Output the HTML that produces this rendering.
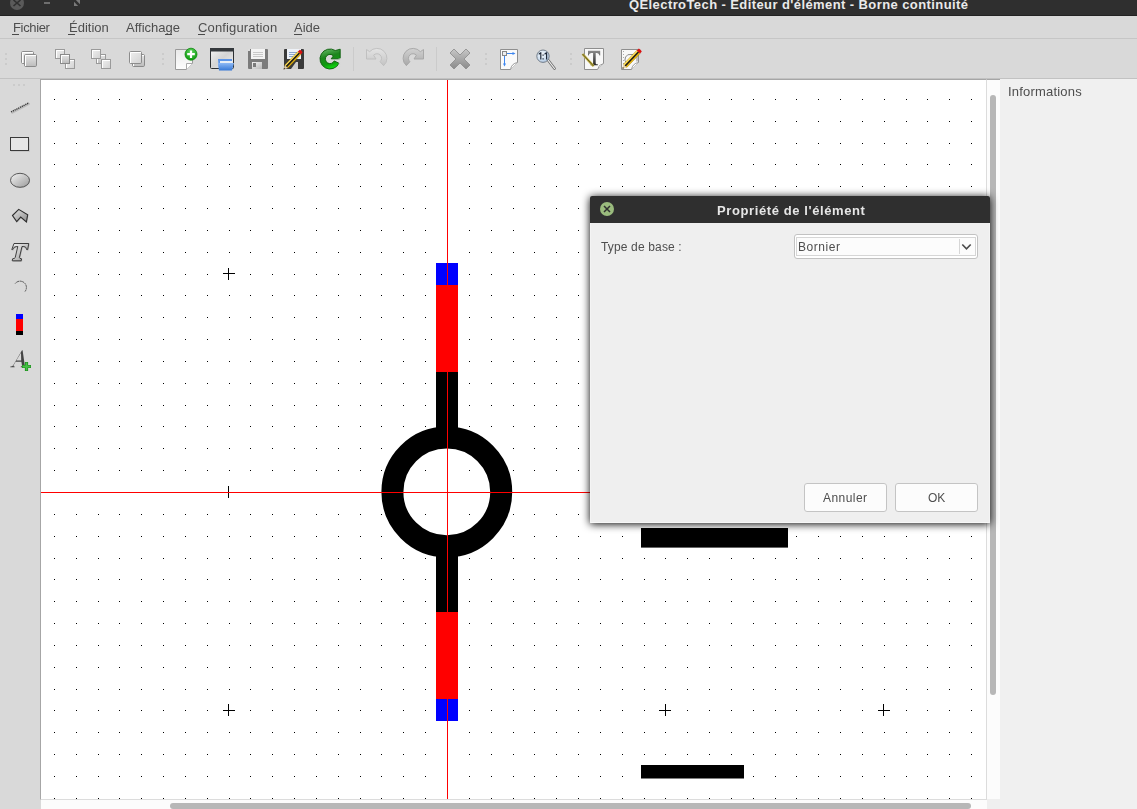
<!DOCTYPE html>
<html><head><meta charset="utf-8">
<style>
*{margin:0;padding:0;box-sizing:border-box}
html,body{width:1137px;height:809px;overflow:hidden;background:#d9d9d9;font-family:"Liberation Sans",sans-serif;}
.a{position:absolute}
.t{position:absolute;white-space:nowrap;font-size:13px;color:#4e4e4e;line-height:13px}
.m{position:absolute;height:1px;background:#4a4a4a}
.g{will-change:transform}
svg{position:absolute;left:0;top:0}
</style></head><body>
<!-- title bar -->
<div class="a" style="left:0;top:0;width:1137px;height:16px;background:#2f2f2f"></div>
<div class="a" style="left:0;top:15px;width:1137px;height:1px;background:#222"></div>
<div class="a" style="left:10px;top:-4px;width:14px;height:14px;border-radius:7px;background:#5a5a5a"></div>
<svg width="100" height="16" viewBox="0 0 100 16">
<path d="M13.5 0L20.5 6M20.5 0L13.5 6" stroke="#2f2f2f" stroke-width="1.6" fill="none"/>
<rect x="44" y="2" width="6" height="2" fill="#6e6e6e"/>
<path d="M74 1.8V6H78.2Z" fill="#7a7a7a"/><path d="M75.8 0H80V4.2Z" fill="#7a7a7a"/>
</svg>
<div class="t" style="left:629px;top:-2px;font-weight:bold;color:#eaeaea;font-size:13px;letter-spacing:0.41px">QElectroTech - Éditeur d'élément - Borne continuité</div>
<!-- menubar -->
<div class="a" style="left:0;top:38px;width:1137px;height:1px;background:#c6c6c6"></div>
<div class="t g" style="left:13px;top:21px;letter-spacing:-0.35px">Fichier</div><div class="m" style="left:12px;top:34px;width:7px"></div>
<div class="t g" style="left:69px;top:21px">Édition</div><div class="m" style="left:68px;top:34px;width:7px"></div>
<div class="t g" style="left:126px;top:21px">Affichage</div><div class="m" style="left:165px;top:34px;width:7px"></div>
<div class="t g" style="left:198px;top:21px;letter-spacing:0.15px">Configuration</div><div class="m" style="left:198px;top:34px;width:7px"></div>
<div class="t g" style="left:294px;top:21px">Aide</div><div class="m" style="left:294px;top:34px;width:8px"></div>
<!-- toolbar bottom -->
<div class="a" style="left:0;top:78px;width:1137px;height:1px;background:#c2c2c2"></div>
<!-- canvas -->
<div class="a" style="left:40px;top:79px;width:947px;height:721px;background:#fff;border-left:1px solid #a6a6a6;border-top:1px solid #a6a6a6;border-right:1px solid #dcdcdc;border-bottom:1px solid #dcdcdc"></div>
<svg width="1137" height="809" viewBox="0 0 1137 809">
<path shape-rendering="crispEdges" fill="#000" d="M54 99h1v1h-1zM76 99h1v1h-1zM98 99h1v1h-1zM119 99h1v1h-1zM141 99h1v1h-1zM163 99h1v1h-1zM185 99h1v1h-1zM207 99h1v1h-1zM229 99h1v1h-1zM250 99h1v1h-1zM272 99h1v1h-1zM294 99h1v1h-1zM316 99h1v1h-1zM338 99h1v1h-1zM360 99h1v1h-1zM381 99h1v1h-1zM403 99h1v1h-1zM425 99h1v1h-1zM447 99h1v1h-1zM469 99h1v1h-1zM491 99h1v1h-1zM513 99h1v1h-1zM534 99h1v1h-1zM556 99h1v1h-1zM578 99h1v1h-1zM600 99h1v1h-1zM622 99h1v1h-1zM644 99h1v1h-1zM665 99h1v1h-1zM687 99h1v1h-1zM709 99h1v1h-1zM731 99h1v1h-1zM753 99h1v1h-1zM775 99h1v1h-1zM796 99h1v1h-1zM818 99h1v1h-1zM840 99h1v1h-1zM862 99h1v1h-1zM884 99h1v1h-1zM906 99h1v1h-1zM927 99h1v1h-1zM949 99h1v1h-1zM971 99h1v1h-1zM54 121h1v1h-1zM76 121h1v1h-1zM98 121h1v1h-1zM119 121h1v1h-1zM141 121h1v1h-1zM163 121h1v1h-1zM185 121h1v1h-1zM207 121h1v1h-1zM229 121h1v1h-1zM250 121h1v1h-1zM272 121h1v1h-1zM294 121h1v1h-1zM316 121h1v1h-1zM338 121h1v1h-1zM360 121h1v1h-1zM381 121h1v1h-1zM403 121h1v1h-1zM425 121h1v1h-1zM447 121h1v1h-1zM469 121h1v1h-1zM491 121h1v1h-1zM513 121h1v1h-1zM534 121h1v1h-1zM556 121h1v1h-1zM578 121h1v1h-1zM600 121h1v1h-1zM622 121h1v1h-1zM644 121h1v1h-1zM665 121h1v1h-1zM687 121h1v1h-1zM709 121h1v1h-1zM731 121h1v1h-1zM753 121h1v1h-1zM775 121h1v1h-1zM796 121h1v1h-1zM818 121h1v1h-1zM840 121h1v1h-1zM862 121h1v1h-1zM884 121h1v1h-1zM906 121h1v1h-1zM927 121h1v1h-1zM949 121h1v1h-1zM971 121h1v1h-1zM54 143h1v1h-1zM76 143h1v1h-1zM98 143h1v1h-1zM119 143h1v1h-1zM141 143h1v1h-1zM163 143h1v1h-1zM185 143h1v1h-1zM207 143h1v1h-1zM229 143h1v1h-1zM250 143h1v1h-1zM272 143h1v1h-1zM294 143h1v1h-1zM316 143h1v1h-1zM338 143h1v1h-1zM360 143h1v1h-1zM381 143h1v1h-1zM403 143h1v1h-1zM425 143h1v1h-1zM447 143h1v1h-1zM469 143h1v1h-1zM491 143h1v1h-1zM513 143h1v1h-1zM534 143h1v1h-1zM556 143h1v1h-1zM578 143h1v1h-1zM600 143h1v1h-1zM622 143h1v1h-1zM644 143h1v1h-1zM665 143h1v1h-1zM687 143h1v1h-1zM709 143h1v1h-1zM731 143h1v1h-1zM753 143h1v1h-1zM775 143h1v1h-1zM796 143h1v1h-1zM818 143h1v1h-1zM840 143h1v1h-1zM862 143h1v1h-1zM884 143h1v1h-1zM906 143h1v1h-1zM927 143h1v1h-1zM949 143h1v1h-1zM971 143h1v1h-1zM54 164h1v1h-1zM76 164h1v1h-1zM98 164h1v1h-1zM119 164h1v1h-1zM141 164h1v1h-1zM163 164h1v1h-1zM185 164h1v1h-1zM207 164h1v1h-1zM229 164h1v1h-1zM250 164h1v1h-1zM272 164h1v1h-1zM294 164h1v1h-1zM316 164h1v1h-1zM338 164h1v1h-1zM360 164h1v1h-1zM381 164h1v1h-1zM403 164h1v1h-1zM425 164h1v1h-1zM447 164h1v1h-1zM469 164h1v1h-1zM491 164h1v1h-1zM513 164h1v1h-1zM534 164h1v1h-1zM556 164h1v1h-1zM578 164h1v1h-1zM600 164h1v1h-1zM622 164h1v1h-1zM644 164h1v1h-1zM665 164h1v1h-1zM687 164h1v1h-1zM709 164h1v1h-1zM731 164h1v1h-1zM753 164h1v1h-1zM775 164h1v1h-1zM796 164h1v1h-1zM818 164h1v1h-1zM840 164h1v1h-1zM862 164h1v1h-1zM884 164h1v1h-1zM906 164h1v1h-1zM927 164h1v1h-1zM949 164h1v1h-1zM971 164h1v1h-1zM54 186h1v1h-1zM76 186h1v1h-1zM98 186h1v1h-1zM119 186h1v1h-1zM141 186h1v1h-1zM163 186h1v1h-1zM185 186h1v1h-1zM207 186h1v1h-1zM229 186h1v1h-1zM250 186h1v1h-1zM272 186h1v1h-1zM294 186h1v1h-1zM316 186h1v1h-1zM338 186h1v1h-1zM360 186h1v1h-1zM381 186h1v1h-1zM403 186h1v1h-1zM425 186h1v1h-1zM447 186h1v1h-1zM469 186h1v1h-1zM491 186h1v1h-1zM513 186h1v1h-1zM534 186h1v1h-1zM556 186h1v1h-1zM578 186h1v1h-1zM600 186h1v1h-1zM622 186h1v1h-1zM644 186h1v1h-1zM665 186h1v1h-1zM687 186h1v1h-1zM709 186h1v1h-1zM731 186h1v1h-1zM753 186h1v1h-1zM775 186h1v1h-1zM796 186h1v1h-1zM818 186h1v1h-1zM840 186h1v1h-1zM862 186h1v1h-1zM884 186h1v1h-1zM906 186h1v1h-1zM927 186h1v1h-1zM949 186h1v1h-1zM971 186h1v1h-1zM54 208h1v1h-1zM76 208h1v1h-1zM98 208h1v1h-1zM119 208h1v1h-1zM141 208h1v1h-1zM163 208h1v1h-1zM185 208h1v1h-1zM207 208h1v1h-1zM229 208h1v1h-1zM250 208h1v1h-1zM272 208h1v1h-1zM294 208h1v1h-1zM316 208h1v1h-1zM338 208h1v1h-1zM360 208h1v1h-1zM381 208h1v1h-1zM403 208h1v1h-1zM425 208h1v1h-1zM447 208h1v1h-1zM469 208h1v1h-1zM491 208h1v1h-1zM513 208h1v1h-1zM534 208h1v1h-1zM556 208h1v1h-1zM578 208h1v1h-1zM600 208h1v1h-1zM622 208h1v1h-1zM644 208h1v1h-1zM665 208h1v1h-1zM687 208h1v1h-1zM709 208h1v1h-1zM731 208h1v1h-1zM753 208h1v1h-1zM775 208h1v1h-1zM796 208h1v1h-1zM818 208h1v1h-1zM840 208h1v1h-1zM862 208h1v1h-1zM884 208h1v1h-1zM906 208h1v1h-1zM927 208h1v1h-1zM949 208h1v1h-1zM971 208h1v1h-1zM54 230h1v1h-1zM76 230h1v1h-1zM98 230h1v1h-1zM119 230h1v1h-1zM141 230h1v1h-1zM163 230h1v1h-1zM185 230h1v1h-1zM207 230h1v1h-1zM229 230h1v1h-1zM250 230h1v1h-1zM272 230h1v1h-1zM294 230h1v1h-1zM316 230h1v1h-1zM338 230h1v1h-1zM360 230h1v1h-1zM381 230h1v1h-1zM403 230h1v1h-1zM425 230h1v1h-1zM447 230h1v1h-1zM469 230h1v1h-1zM491 230h1v1h-1zM513 230h1v1h-1zM534 230h1v1h-1zM556 230h1v1h-1zM578 230h1v1h-1zM600 230h1v1h-1zM622 230h1v1h-1zM644 230h1v1h-1zM665 230h1v1h-1zM687 230h1v1h-1zM709 230h1v1h-1zM731 230h1v1h-1zM753 230h1v1h-1zM775 230h1v1h-1zM796 230h1v1h-1zM818 230h1v1h-1zM840 230h1v1h-1zM862 230h1v1h-1zM884 230h1v1h-1zM906 230h1v1h-1zM927 230h1v1h-1zM949 230h1v1h-1zM971 230h1v1h-1zM54 252h1v1h-1zM76 252h1v1h-1zM98 252h1v1h-1zM119 252h1v1h-1zM141 252h1v1h-1zM163 252h1v1h-1zM185 252h1v1h-1zM207 252h1v1h-1zM229 252h1v1h-1zM250 252h1v1h-1zM272 252h1v1h-1zM294 252h1v1h-1zM316 252h1v1h-1zM338 252h1v1h-1zM360 252h1v1h-1zM381 252h1v1h-1zM403 252h1v1h-1zM425 252h1v1h-1zM447 252h1v1h-1zM469 252h1v1h-1zM491 252h1v1h-1zM513 252h1v1h-1zM534 252h1v1h-1zM556 252h1v1h-1zM578 252h1v1h-1zM600 252h1v1h-1zM622 252h1v1h-1zM644 252h1v1h-1zM665 252h1v1h-1zM687 252h1v1h-1zM709 252h1v1h-1zM731 252h1v1h-1zM753 252h1v1h-1zM775 252h1v1h-1zM796 252h1v1h-1zM818 252h1v1h-1zM840 252h1v1h-1zM862 252h1v1h-1zM884 252h1v1h-1zM906 252h1v1h-1zM927 252h1v1h-1zM949 252h1v1h-1zM971 252h1v1h-1zM54 274h1v1h-1zM76 274h1v1h-1zM98 274h1v1h-1zM119 274h1v1h-1zM141 274h1v1h-1zM163 274h1v1h-1zM185 274h1v1h-1zM207 274h1v1h-1zM250 274h1v1h-1zM272 274h1v1h-1zM294 274h1v1h-1zM316 274h1v1h-1zM338 274h1v1h-1zM360 274h1v1h-1zM381 274h1v1h-1zM403 274h1v1h-1zM425 274h1v1h-1zM469 274h1v1h-1zM491 274h1v1h-1zM513 274h1v1h-1zM534 274h1v1h-1zM556 274h1v1h-1zM578 274h1v1h-1zM600 274h1v1h-1zM622 274h1v1h-1zM644 274h1v1h-1zM687 274h1v1h-1zM709 274h1v1h-1zM731 274h1v1h-1zM753 274h1v1h-1zM775 274h1v1h-1zM796 274h1v1h-1zM818 274h1v1h-1zM840 274h1v1h-1zM862 274h1v1h-1zM906 274h1v1h-1zM927 274h1v1h-1zM949 274h1v1h-1zM971 274h1v1h-1zM54 295h1v1h-1zM76 295h1v1h-1zM98 295h1v1h-1zM119 295h1v1h-1zM141 295h1v1h-1zM163 295h1v1h-1zM185 295h1v1h-1zM207 295h1v1h-1zM229 295h1v1h-1zM250 295h1v1h-1zM272 295h1v1h-1zM294 295h1v1h-1zM316 295h1v1h-1zM338 295h1v1h-1zM360 295h1v1h-1zM381 295h1v1h-1zM403 295h1v1h-1zM425 295h1v1h-1zM447 295h1v1h-1zM469 295h1v1h-1zM491 295h1v1h-1zM513 295h1v1h-1zM534 295h1v1h-1zM556 295h1v1h-1zM578 295h1v1h-1zM600 295h1v1h-1zM622 295h1v1h-1zM644 295h1v1h-1zM665 295h1v1h-1zM687 295h1v1h-1zM709 295h1v1h-1zM731 295h1v1h-1zM753 295h1v1h-1zM775 295h1v1h-1zM796 295h1v1h-1zM818 295h1v1h-1zM840 295h1v1h-1zM862 295h1v1h-1zM884 295h1v1h-1zM906 295h1v1h-1zM927 295h1v1h-1zM949 295h1v1h-1zM971 295h1v1h-1zM54 317h1v1h-1zM76 317h1v1h-1zM98 317h1v1h-1zM119 317h1v1h-1zM141 317h1v1h-1zM163 317h1v1h-1zM185 317h1v1h-1zM207 317h1v1h-1zM229 317h1v1h-1zM250 317h1v1h-1zM272 317h1v1h-1zM294 317h1v1h-1zM316 317h1v1h-1zM338 317h1v1h-1zM360 317h1v1h-1zM381 317h1v1h-1zM403 317h1v1h-1zM425 317h1v1h-1zM447 317h1v1h-1zM469 317h1v1h-1zM491 317h1v1h-1zM513 317h1v1h-1zM534 317h1v1h-1zM556 317h1v1h-1zM578 317h1v1h-1zM600 317h1v1h-1zM622 317h1v1h-1zM644 317h1v1h-1zM665 317h1v1h-1zM687 317h1v1h-1zM709 317h1v1h-1zM731 317h1v1h-1zM753 317h1v1h-1zM775 317h1v1h-1zM796 317h1v1h-1zM818 317h1v1h-1zM840 317h1v1h-1zM862 317h1v1h-1zM884 317h1v1h-1zM906 317h1v1h-1zM927 317h1v1h-1zM949 317h1v1h-1zM971 317h1v1h-1zM54 339h1v1h-1zM76 339h1v1h-1zM98 339h1v1h-1zM119 339h1v1h-1zM141 339h1v1h-1zM163 339h1v1h-1zM185 339h1v1h-1zM207 339h1v1h-1zM229 339h1v1h-1zM250 339h1v1h-1zM272 339h1v1h-1zM294 339h1v1h-1zM316 339h1v1h-1zM338 339h1v1h-1zM360 339h1v1h-1zM381 339h1v1h-1zM403 339h1v1h-1zM425 339h1v1h-1zM447 339h1v1h-1zM469 339h1v1h-1zM491 339h1v1h-1zM513 339h1v1h-1zM534 339h1v1h-1zM556 339h1v1h-1zM578 339h1v1h-1zM600 339h1v1h-1zM622 339h1v1h-1zM644 339h1v1h-1zM665 339h1v1h-1zM687 339h1v1h-1zM709 339h1v1h-1zM731 339h1v1h-1zM753 339h1v1h-1zM775 339h1v1h-1zM796 339h1v1h-1zM818 339h1v1h-1zM840 339h1v1h-1zM862 339h1v1h-1zM884 339h1v1h-1zM906 339h1v1h-1zM927 339h1v1h-1zM949 339h1v1h-1zM971 339h1v1h-1zM54 361h1v1h-1zM76 361h1v1h-1zM98 361h1v1h-1zM119 361h1v1h-1zM141 361h1v1h-1zM163 361h1v1h-1zM185 361h1v1h-1zM207 361h1v1h-1zM229 361h1v1h-1zM250 361h1v1h-1zM272 361h1v1h-1zM294 361h1v1h-1zM316 361h1v1h-1zM338 361h1v1h-1zM360 361h1v1h-1zM381 361h1v1h-1zM403 361h1v1h-1zM425 361h1v1h-1zM447 361h1v1h-1zM469 361h1v1h-1zM491 361h1v1h-1zM513 361h1v1h-1zM534 361h1v1h-1zM556 361h1v1h-1zM578 361h1v1h-1zM600 361h1v1h-1zM622 361h1v1h-1zM644 361h1v1h-1zM665 361h1v1h-1zM687 361h1v1h-1zM709 361h1v1h-1zM731 361h1v1h-1zM753 361h1v1h-1zM775 361h1v1h-1zM796 361h1v1h-1zM818 361h1v1h-1zM840 361h1v1h-1zM862 361h1v1h-1zM884 361h1v1h-1zM906 361h1v1h-1zM927 361h1v1h-1zM949 361h1v1h-1zM971 361h1v1h-1zM54 383h1v1h-1zM76 383h1v1h-1zM98 383h1v1h-1zM119 383h1v1h-1zM141 383h1v1h-1zM163 383h1v1h-1zM185 383h1v1h-1zM207 383h1v1h-1zM229 383h1v1h-1zM250 383h1v1h-1zM272 383h1v1h-1zM294 383h1v1h-1zM316 383h1v1h-1zM338 383h1v1h-1zM360 383h1v1h-1zM381 383h1v1h-1zM403 383h1v1h-1zM425 383h1v1h-1zM447 383h1v1h-1zM469 383h1v1h-1zM491 383h1v1h-1zM513 383h1v1h-1zM534 383h1v1h-1zM556 383h1v1h-1zM578 383h1v1h-1zM600 383h1v1h-1zM622 383h1v1h-1zM644 383h1v1h-1zM665 383h1v1h-1zM687 383h1v1h-1zM709 383h1v1h-1zM731 383h1v1h-1zM753 383h1v1h-1zM775 383h1v1h-1zM796 383h1v1h-1zM818 383h1v1h-1zM840 383h1v1h-1zM862 383h1v1h-1zM884 383h1v1h-1zM906 383h1v1h-1zM927 383h1v1h-1zM949 383h1v1h-1zM971 383h1v1h-1zM54 405h1v1h-1zM76 405h1v1h-1zM98 405h1v1h-1zM119 405h1v1h-1zM141 405h1v1h-1zM163 405h1v1h-1zM185 405h1v1h-1zM207 405h1v1h-1zM229 405h1v1h-1zM250 405h1v1h-1zM272 405h1v1h-1zM294 405h1v1h-1zM316 405h1v1h-1zM338 405h1v1h-1zM360 405h1v1h-1zM381 405h1v1h-1zM403 405h1v1h-1zM425 405h1v1h-1zM447 405h1v1h-1zM469 405h1v1h-1zM491 405h1v1h-1zM513 405h1v1h-1zM534 405h1v1h-1zM556 405h1v1h-1zM578 405h1v1h-1zM600 405h1v1h-1zM622 405h1v1h-1zM644 405h1v1h-1zM665 405h1v1h-1zM687 405h1v1h-1zM709 405h1v1h-1zM731 405h1v1h-1zM753 405h1v1h-1zM775 405h1v1h-1zM796 405h1v1h-1zM818 405h1v1h-1zM840 405h1v1h-1zM862 405h1v1h-1zM884 405h1v1h-1zM906 405h1v1h-1zM927 405h1v1h-1zM949 405h1v1h-1zM971 405h1v1h-1zM54 426h1v1h-1zM76 426h1v1h-1zM98 426h1v1h-1zM119 426h1v1h-1zM141 426h1v1h-1zM163 426h1v1h-1zM185 426h1v1h-1zM207 426h1v1h-1zM229 426h1v1h-1zM250 426h1v1h-1zM272 426h1v1h-1zM294 426h1v1h-1zM316 426h1v1h-1zM338 426h1v1h-1zM360 426h1v1h-1zM381 426h1v1h-1zM403 426h1v1h-1zM425 426h1v1h-1zM447 426h1v1h-1zM469 426h1v1h-1zM491 426h1v1h-1zM513 426h1v1h-1zM534 426h1v1h-1zM556 426h1v1h-1zM578 426h1v1h-1zM600 426h1v1h-1zM622 426h1v1h-1zM644 426h1v1h-1zM665 426h1v1h-1zM687 426h1v1h-1zM709 426h1v1h-1zM731 426h1v1h-1zM753 426h1v1h-1zM775 426h1v1h-1zM796 426h1v1h-1zM818 426h1v1h-1zM840 426h1v1h-1zM862 426h1v1h-1zM884 426h1v1h-1zM906 426h1v1h-1zM927 426h1v1h-1zM949 426h1v1h-1zM971 426h1v1h-1zM54 448h1v1h-1zM76 448h1v1h-1zM98 448h1v1h-1zM119 448h1v1h-1zM141 448h1v1h-1zM163 448h1v1h-1zM185 448h1v1h-1zM207 448h1v1h-1zM229 448h1v1h-1zM250 448h1v1h-1zM272 448h1v1h-1zM294 448h1v1h-1zM316 448h1v1h-1zM338 448h1v1h-1zM360 448h1v1h-1zM381 448h1v1h-1zM403 448h1v1h-1zM425 448h1v1h-1zM447 448h1v1h-1zM469 448h1v1h-1zM491 448h1v1h-1zM513 448h1v1h-1zM534 448h1v1h-1zM556 448h1v1h-1zM578 448h1v1h-1zM600 448h1v1h-1zM622 448h1v1h-1zM644 448h1v1h-1zM665 448h1v1h-1zM687 448h1v1h-1zM709 448h1v1h-1zM731 448h1v1h-1zM753 448h1v1h-1zM775 448h1v1h-1zM796 448h1v1h-1zM818 448h1v1h-1zM840 448h1v1h-1zM862 448h1v1h-1zM884 448h1v1h-1zM906 448h1v1h-1zM927 448h1v1h-1zM949 448h1v1h-1zM971 448h1v1h-1zM54 470h1v1h-1zM76 470h1v1h-1zM98 470h1v1h-1zM119 470h1v1h-1zM141 470h1v1h-1zM163 470h1v1h-1zM185 470h1v1h-1zM207 470h1v1h-1zM229 470h1v1h-1zM250 470h1v1h-1zM272 470h1v1h-1zM294 470h1v1h-1zM316 470h1v1h-1zM338 470h1v1h-1zM360 470h1v1h-1zM381 470h1v1h-1zM403 470h1v1h-1zM425 470h1v1h-1zM447 470h1v1h-1zM469 470h1v1h-1zM491 470h1v1h-1zM513 470h1v1h-1zM534 470h1v1h-1zM556 470h1v1h-1zM578 470h1v1h-1zM600 470h1v1h-1zM622 470h1v1h-1zM644 470h1v1h-1zM665 470h1v1h-1zM687 470h1v1h-1zM709 470h1v1h-1zM731 470h1v1h-1zM753 470h1v1h-1zM775 470h1v1h-1zM796 470h1v1h-1zM818 470h1v1h-1zM840 470h1v1h-1zM862 470h1v1h-1zM884 470h1v1h-1zM906 470h1v1h-1zM927 470h1v1h-1zM949 470h1v1h-1zM971 470h1v1h-1zM54 492h1v1h-1zM76 492h1v1h-1zM98 492h1v1h-1zM119 492h1v1h-1zM141 492h1v1h-1zM163 492h1v1h-1zM185 492h1v1h-1zM207 492h1v1h-1zM250 492h1v1h-1zM272 492h1v1h-1zM294 492h1v1h-1zM316 492h1v1h-1zM338 492h1v1h-1zM360 492h1v1h-1zM381 492h1v1h-1zM403 492h1v1h-1zM425 492h1v1h-1zM469 492h1v1h-1zM491 492h1v1h-1zM513 492h1v1h-1zM534 492h1v1h-1zM556 492h1v1h-1zM578 492h1v1h-1zM600 492h1v1h-1zM622 492h1v1h-1zM644 492h1v1h-1zM687 492h1v1h-1zM709 492h1v1h-1zM731 492h1v1h-1zM753 492h1v1h-1zM775 492h1v1h-1zM796 492h1v1h-1zM818 492h1v1h-1zM840 492h1v1h-1zM862 492h1v1h-1zM906 492h1v1h-1zM927 492h1v1h-1zM949 492h1v1h-1zM971 492h1v1h-1zM54 514h1v1h-1zM76 514h1v1h-1zM98 514h1v1h-1zM119 514h1v1h-1zM141 514h1v1h-1zM163 514h1v1h-1zM185 514h1v1h-1zM207 514h1v1h-1zM229 514h1v1h-1zM250 514h1v1h-1zM272 514h1v1h-1zM294 514h1v1h-1zM316 514h1v1h-1zM338 514h1v1h-1zM360 514h1v1h-1zM381 514h1v1h-1zM403 514h1v1h-1zM425 514h1v1h-1zM447 514h1v1h-1zM469 514h1v1h-1zM491 514h1v1h-1zM513 514h1v1h-1zM534 514h1v1h-1zM556 514h1v1h-1zM578 514h1v1h-1zM600 514h1v1h-1zM622 514h1v1h-1zM644 514h1v1h-1zM665 514h1v1h-1zM687 514h1v1h-1zM709 514h1v1h-1zM731 514h1v1h-1zM753 514h1v1h-1zM775 514h1v1h-1zM796 514h1v1h-1zM818 514h1v1h-1zM840 514h1v1h-1zM862 514h1v1h-1zM884 514h1v1h-1zM906 514h1v1h-1zM927 514h1v1h-1zM949 514h1v1h-1zM971 514h1v1h-1zM54 536h1v1h-1zM76 536h1v1h-1zM98 536h1v1h-1zM119 536h1v1h-1zM141 536h1v1h-1zM163 536h1v1h-1zM185 536h1v1h-1zM207 536h1v1h-1zM229 536h1v1h-1zM250 536h1v1h-1zM272 536h1v1h-1zM294 536h1v1h-1zM316 536h1v1h-1zM338 536h1v1h-1zM360 536h1v1h-1zM381 536h1v1h-1zM403 536h1v1h-1zM425 536h1v1h-1zM447 536h1v1h-1zM469 536h1v1h-1zM491 536h1v1h-1zM513 536h1v1h-1zM534 536h1v1h-1zM556 536h1v1h-1zM578 536h1v1h-1zM600 536h1v1h-1zM622 536h1v1h-1zM644 536h1v1h-1zM665 536h1v1h-1zM687 536h1v1h-1zM709 536h1v1h-1zM731 536h1v1h-1zM753 536h1v1h-1zM775 536h1v1h-1zM796 536h1v1h-1zM818 536h1v1h-1zM840 536h1v1h-1zM862 536h1v1h-1zM884 536h1v1h-1zM906 536h1v1h-1zM927 536h1v1h-1zM949 536h1v1h-1zM971 536h1v1h-1zM54 558h1v1h-1zM76 558h1v1h-1zM98 558h1v1h-1zM119 558h1v1h-1zM141 558h1v1h-1zM163 558h1v1h-1zM185 558h1v1h-1zM207 558h1v1h-1zM229 558h1v1h-1zM250 558h1v1h-1zM272 558h1v1h-1zM294 558h1v1h-1zM316 558h1v1h-1zM338 558h1v1h-1zM360 558h1v1h-1zM381 558h1v1h-1zM403 558h1v1h-1zM425 558h1v1h-1zM447 558h1v1h-1zM469 558h1v1h-1zM491 558h1v1h-1zM513 558h1v1h-1zM534 558h1v1h-1zM556 558h1v1h-1zM578 558h1v1h-1zM600 558h1v1h-1zM622 558h1v1h-1zM644 558h1v1h-1zM665 558h1v1h-1zM687 558h1v1h-1zM709 558h1v1h-1zM731 558h1v1h-1zM753 558h1v1h-1zM775 558h1v1h-1zM796 558h1v1h-1zM818 558h1v1h-1zM840 558h1v1h-1zM862 558h1v1h-1zM884 558h1v1h-1zM906 558h1v1h-1zM927 558h1v1h-1zM949 558h1v1h-1zM971 558h1v1h-1zM54 579h1v1h-1zM76 579h1v1h-1zM98 579h1v1h-1zM119 579h1v1h-1zM141 579h1v1h-1zM163 579h1v1h-1zM185 579h1v1h-1zM207 579h1v1h-1zM229 579h1v1h-1zM250 579h1v1h-1zM272 579h1v1h-1zM294 579h1v1h-1zM316 579h1v1h-1zM338 579h1v1h-1zM360 579h1v1h-1zM381 579h1v1h-1zM403 579h1v1h-1zM425 579h1v1h-1zM447 579h1v1h-1zM469 579h1v1h-1zM491 579h1v1h-1zM513 579h1v1h-1zM534 579h1v1h-1zM556 579h1v1h-1zM578 579h1v1h-1zM600 579h1v1h-1zM622 579h1v1h-1zM644 579h1v1h-1zM665 579h1v1h-1zM687 579h1v1h-1zM709 579h1v1h-1zM731 579h1v1h-1zM753 579h1v1h-1zM775 579h1v1h-1zM796 579h1v1h-1zM818 579h1v1h-1zM840 579h1v1h-1zM862 579h1v1h-1zM884 579h1v1h-1zM906 579h1v1h-1zM927 579h1v1h-1zM949 579h1v1h-1zM971 579h1v1h-1zM54 601h1v1h-1zM76 601h1v1h-1zM98 601h1v1h-1zM119 601h1v1h-1zM141 601h1v1h-1zM163 601h1v1h-1zM185 601h1v1h-1zM207 601h1v1h-1zM229 601h1v1h-1zM250 601h1v1h-1zM272 601h1v1h-1zM294 601h1v1h-1zM316 601h1v1h-1zM338 601h1v1h-1zM360 601h1v1h-1zM381 601h1v1h-1zM403 601h1v1h-1zM425 601h1v1h-1zM447 601h1v1h-1zM469 601h1v1h-1zM491 601h1v1h-1zM513 601h1v1h-1zM534 601h1v1h-1zM556 601h1v1h-1zM578 601h1v1h-1zM600 601h1v1h-1zM622 601h1v1h-1zM644 601h1v1h-1zM665 601h1v1h-1zM687 601h1v1h-1zM709 601h1v1h-1zM731 601h1v1h-1zM753 601h1v1h-1zM775 601h1v1h-1zM796 601h1v1h-1zM818 601h1v1h-1zM840 601h1v1h-1zM862 601h1v1h-1zM884 601h1v1h-1zM906 601h1v1h-1zM927 601h1v1h-1zM949 601h1v1h-1zM971 601h1v1h-1zM54 623h1v1h-1zM76 623h1v1h-1zM98 623h1v1h-1zM119 623h1v1h-1zM141 623h1v1h-1zM163 623h1v1h-1zM185 623h1v1h-1zM207 623h1v1h-1zM229 623h1v1h-1zM250 623h1v1h-1zM272 623h1v1h-1zM294 623h1v1h-1zM316 623h1v1h-1zM338 623h1v1h-1zM360 623h1v1h-1zM381 623h1v1h-1zM403 623h1v1h-1zM425 623h1v1h-1zM447 623h1v1h-1zM469 623h1v1h-1zM491 623h1v1h-1zM513 623h1v1h-1zM534 623h1v1h-1zM556 623h1v1h-1zM578 623h1v1h-1zM600 623h1v1h-1zM622 623h1v1h-1zM644 623h1v1h-1zM665 623h1v1h-1zM687 623h1v1h-1zM709 623h1v1h-1zM731 623h1v1h-1zM753 623h1v1h-1zM775 623h1v1h-1zM796 623h1v1h-1zM818 623h1v1h-1zM840 623h1v1h-1zM862 623h1v1h-1zM884 623h1v1h-1zM906 623h1v1h-1zM927 623h1v1h-1zM949 623h1v1h-1zM971 623h1v1h-1zM54 645h1v1h-1zM76 645h1v1h-1zM98 645h1v1h-1zM119 645h1v1h-1zM141 645h1v1h-1zM163 645h1v1h-1zM185 645h1v1h-1zM207 645h1v1h-1zM229 645h1v1h-1zM250 645h1v1h-1zM272 645h1v1h-1zM294 645h1v1h-1zM316 645h1v1h-1zM338 645h1v1h-1zM360 645h1v1h-1zM381 645h1v1h-1zM403 645h1v1h-1zM425 645h1v1h-1zM447 645h1v1h-1zM469 645h1v1h-1zM491 645h1v1h-1zM513 645h1v1h-1zM534 645h1v1h-1zM556 645h1v1h-1zM578 645h1v1h-1zM600 645h1v1h-1zM622 645h1v1h-1zM644 645h1v1h-1zM665 645h1v1h-1zM687 645h1v1h-1zM709 645h1v1h-1zM731 645h1v1h-1zM753 645h1v1h-1zM775 645h1v1h-1zM796 645h1v1h-1zM818 645h1v1h-1zM840 645h1v1h-1zM862 645h1v1h-1zM884 645h1v1h-1zM906 645h1v1h-1zM927 645h1v1h-1zM949 645h1v1h-1zM971 645h1v1h-1zM54 667h1v1h-1zM76 667h1v1h-1zM98 667h1v1h-1zM119 667h1v1h-1zM141 667h1v1h-1zM163 667h1v1h-1zM185 667h1v1h-1zM207 667h1v1h-1zM229 667h1v1h-1zM250 667h1v1h-1zM272 667h1v1h-1zM294 667h1v1h-1zM316 667h1v1h-1zM338 667h1v1h-1zM360 667h1v1h-1zM381 667h1v1h-1zM403 667h1v1h-1zM425 667h1v1h-1zM447 667h1v1h-1zM469 667h1v1h-1zM491 667h1v1h-1zM513 667h1v1h-1zM534 667h1v1h-1zM556 667h1v1h-1zM578 667h1v1h-1zM600 667h1v1h-1zM622 667h1v1h-1zM644 667h1v1h-1zM665 667h1v1h-1zM687 667h1v1h-1zM709 667h1v1h-1zM731 667h1v1h-1zM753 667h1v1h-1zM775 667h1v1h-1zM796 667h1v1h-1zM818 667h1v1h-1zM840 667h1v1h-1zM862 667h1v1h-1zM884 667h1v1h-1zM906 667h1v1h-1zM927 667h1v1h-1zM949 667h1v1h-1zM971 667h1v1h-1zM54 689h1v1h-1zM76 689h1v1h-1zM98 689h1v1h-1zM119 689h1v1h-1zM141 689h1v1h-1zM163 689h1v1h-1zM185 689h1v1h-1zM207 689h1v1h-1zM229 689h1v1h-1zM250 689h1v1h-1zM272 689h1v1h-1zM294 689h1v1h-1zM316 689h1v1h-1zM338 689h1v1h-1zM360 689h1v1h-1zM381 689h1v1h-1zM403 689h1v1h-1zM425 689h1v1h-1zM447 689h1v1h-1zM469 689h1v1h-1zM491 689h1v1h-1zM513 689h1v1h-1zM534 689h1v1h-1zM556 689h1v1h-1zM578 689h1v1h-1zM600 689h1v1h-1zM622 689h1v1h-1zM644 689h1v1h-1zM665 689h1v1h-1zM687 689h1v1h-1zM709 689h1v1h-1zM731 689h1v1h-1zM753 689h1v1h-1zM775 689h1v1h-1zM796 689h1v1h-1zM818 689h1v1h-1zM840 689h1v1h-1zM862 689h1v1h-1zM884 689h1v1h-1zM906 689h1v1h-1zM927 689h1v1h-1zM949 689h1v1h-1zM971 689h1v1h-1zM54 710h1v1h-1zM76 710h1v1h-1zM98 710h1v1h-1zM119 710h1v1h-1zM141 710h1v1h-1zM163 710h1v1h-1zM185 710h1v1h-1zM207 710h1v1h-1zM250 710h1v1h-1zM272 710h1v1h-1zM294 710h1v1h-1zM316 710h1v1h-1zM338 710h1v1h-1zM360 710h1v1h-1zM381 710h1v1h-1zM403 710h1v1h-1zM425 710h1v1h-1zM469 710h1v1h-1zM491 710h1v1h-1zM513 710h1v1h-1zM534 710h1v1h-1zM556 710h1v1h-1zM578 710h1v1h-1zM600 710h1v1h-1zM622 710h1v1h-1zM644 710h1v1h-1zM687 710h1v1h-1zM709 710h1v1h-1zM731 710h1v1h-1zM753 710h1v1h-1zM775 710h1v1h-1zM796 710h1v1h-1zM818 710h1v1h-1zM840 710h1v1h-1zM862 710h1v1h-1zM906 710h1v1h-1zM927 710h1v1h-1zM949 710h1v1h-1zM971 710h1v1h-1zM54 732h1v1h-1zM76 732h1v1h-1zM98 732h1v1h-1zM119 732h1v1h-1zM141 732h1v1h-1zM163 732h1v1h-1zM185 732h1v1h-1zM207 732h1v1h-1zM229 732h1v1h-1zM250 732h1v1h-1zM272 732h1v1h-1zM294 732h1v1h-1zM316 732h1v1h-1zM338 732h1v1h-1zM360 732h1v1h-1zM381 732h1v1h-1zM403 732h1v1h-1zM425 732h1v1h-1zM447 732h1v1h-1zM469 732h1v1h-1zM491 732h1v1h-1zM513 732h1v1h-1zM534 732h1v1h-1zM556 732h1v1h-1zM578 732h1v1h-1zM600 732h1v1h-1zM622 732h1v1h-1zM644 732h1v1h-1zM665 732h1v1h-1zM687 732h1v1h-1zM709 732h1v1h-1zM731 732h1v1h-1zM753 732h1v1h-1zM775 732h1v1h-1zM796 732h1v1h-1zM818 732h1v1h-1zM840 732h1v1h-1zM862 732h1v1h-1zM884 732h1v1h-1zM906 732h1v1h-1zM927 732h1v1h-1zM949 732h1v1h-1zM971 732h1v1h-1zM54 754h1v1h-1zM76 754h1v1h-1zM98 754h1v1h-1zM119 754h1v1h-1zM141 754h1v1h-1zM163 754h1v1h-1zM185 754h1v1h-1zM207 754h1v1h-1zM229 754h1v1h-1zM250 754h1v1h-1zM272 754h1v1h-1zM294 754h1v1h-1zM316 754h1v1h-1zM338 754h1v1h-1zM360 754h1v1h-1zM381 754h1v1h-1zM403 754h1v1h-1zM425 754h1v1h-1zM447 754h1v1h-1zM469 754h1v1h-1zM491 754h1v1h-1zM513 754h1v1h-1zM534 754h1v1h-1zM556 754h1v1h-1zM578 754h1v1h-1zM600 754h1v1h-1zM622 754h1v1h-1zM644 754h1v1h-1zM665 754h1v1h-1zM687 754h1v1h-1zM709 754h1v1h-1zM731 754h1v1h-1zM753 754h1v1h-1zM775 754h1v1h-1zM796 754h1v1h-1zM818 754h1v1h-1zM840 754h1v1h-1zM862 754h1v1h-1zM884 754h1v1h-1zM906 754h1v1h-1zM927 754h1v1h-1zM949 754h1v1h-1zM971 754h1v1h-1zM54 776h1v1h-1zM76 776h1v1h-1zM98 776h1v1h-1zM119 776h1v1h-1zM141 776h1v1h-1zM163 776h1v1h-1zM185 776h1v1h-1zM207 776h1v1h-1zM229 776h1v1h-1zM250 776h1v1h-1zM272 776h1v1h-1zM294 776h1v1h-1zM316 776h1v1h-1zM338 776h1v1h-1zM360 776h1v1h-1zM381 776h1v1h-1zM403 776h1v1h-1zM425 776h1v1h-1zM447 776h1v1h-1zM469 776h1v1h-1zM491 776h1v1h-1zM513 776h1v1h-1zM534 776h1v1h-1zM556 776h1v1h-1zM578 776h1v1h-1zM600 776h1v1h-1zM622 776h1v1h-1zM644 776h1v1h-1zM665 776h1v1h-1zM687 776h1v1h-1zM709 776h1v1h-1zM731 776h1v1h-1zM753 776h1v1h-1zM775 776h1v1h-1zM796 776h1v1h-1zM818 776h1v1h-1zM840 776h1v1h-1zM862 776h1v1h-1zM884 776h1v1h-1zM906 776h1v1h-1zM927 776h1v1h-1zM949 776h1v1h-1zM971 776h1v1h-1zM54 798h1v1h-1zM76 798h1v1h-1zM98 798h1v1h-1zM119 798h1v1h-1zM141 798h1v1h-1zM163 798h1v1h-1zM185 798h1v1h-1zM207 798h1v1h-1zM229 798h1v1h-1zM250 798h1v1h-1zM272 798h1v1h-1zM294 798h1v1h-1zM316 798h1v1h-1zM338 798h1v1h-1zM360 798h1v1h-1zM381 798h1v1h-1zM403 798h1v1h-1zM425 798h1v1h-1zM447 798h1v1h-1zM469 798h1v1h-1zM491 798h1v1h-1zM513 798h1v1h-1zM534 798h1v1h-1zM556 798h1v1h-1zM578 798h1v1h-1zM600 798h1v1h-1zM622 798h1v1h-1zM644 798h1v1h-1zM665 798h1v1h-1zM687 798h1v1h-1zM709 798h1v1h-1zM731 798h1v1h-1zM753 798h1v1h-1zM775 798h1v1h-1zM796 798h1v1h-1zM818 798h1v1h-1zM840 798h1v1h-1zM862 798h1v1h-1zM884 798h1v1h-1zM906 798h1v1h-1zM927 798h1v1h-1zM949 798h1v1h-1zM971 798h1v1h-1z"/>
<g fill="#000" shape-rendering="crispEdges">
<rect x="223" y="273" width="12" height="1"/><rect x="228" y="268" width="1" height="12"/>
<rect x="228" y="486" width="1" height="12"/>
<rect x="223" y="710" width="12" height="1"/><rect x="228" y="704" width="1" height="12"/>
<rect x="659" y="710" width="12" height="1"/><rect x="665" y="704" width="1" height="12"/>
<rect x="878" y="710" width="12" height="1"/><rect x="883" y="704" width="1" height="12"/>
</g>
<!-- element -->
<rect x="436" y="263" width="22" height="22" fill="#00f"/>
<rect x="436" y="285" width="22" height="87" fill="#f00"/>
<rect x="436" y="372" width="22" height="76" fill="#000"/>
<rect x="436" y="537" width="22" height="75" fill="#000"/>
<rect x="436" y="612" width="22" height="87" fill="#f00"/>
<rect x="436" y="699" width="22" height="22" fill="#00f"/>
<circle cx="446.8" cy="491.9" r="54.4" stroke="#000" stroke-width="22" fill="none"/>
<rect x="41" y="492" width="945" height="1" fill="#f00"/>
<rect x="447" y="80" width="1" height="719" fill="#f00"/>
<rect x="641" y="528" width="147" height="19.6" fill="#000"/>
<rect x="641" y="765" width="103" height="13.5" fill="#000"/>
</svg>
<!-- scrollbars -->
<div class="a" style="left:987px;top:80px;width:13px;height:719px;background:#fcfcfc"></div>
<div class="a" style="left:990px;top:95px;width:6px;height:600px;background:#b7b7b7;border-radius:3px"></div>
<div class="a" style="left:41px;top:800px;width:946px;height:9px;background:#fcfcfc"></div>
<div class="a" style="left:170px;top:803px;width:801px;height:6px;background:#b7b7b7;border-radius:3px"></div>
<div class="a" style="left:987px;top:799px;width:13px;height:10px;background:#efefef"></div>
<div class="a" style="left:987px;top:79px;width:13px;height:1px;background:#a6a6a6"></div>
<!-- dock -->
<div class="a" style="left:1000px;top:79px;width:137px;height:730px;background:#f0f0f0"></div>
<div class="t g" style="left:1008px;top:85px;letter-spacing:0.2px">Informations</div>
<svg width="700" height="400" viewBox="0 0 700 400">
<defs>
<linearGradient id="gsq" x1="0" y1="0" x2="0" y2="1"><stop offset="0" stop-color="#e6e6e6"/><stop offset="1" stop-color="#bcbcbc"/></linearGradient>
<linearGradient id="gsq2" x1="0" y1="0" x2="1" y2="1"><stop offset="0" stop-color="#f0f0f0"/><stop offset="1" stop-color="#d2d2d2"/></linearGradient>
<linearGradient id="gpage" x1="0" y1="0" x2="0" y2="1"><stop offset="0" stop-color="#e9e9e9"/><stop offset="1" stop-color="#fdfdfd"/></linearGradient>
<radialGradient id="ggreen" cx="0.5" cy="0.3" r="0.7"><stop offset="0" stop-color="#5fd35f"/><stop offset="1" stop-color="#0a9a0a"/></radialGradient>
<linearGradient id="gfolder" x1="0" y1="0" x2="0" y2="1"><stop offset="0" stop-color="#8db8f5"/><stop offset="1" stop-color="#3778d6"/></linearGradient>
<linearGradient id="gwin" x1="0" y1="0" x2="1" y2="1"><stop offset="0" stop-color="#f4f4f4"/><stop offset="0.5" stop-color="#d4d4d4"/><stop offset="1" stop-color="#f2f2f2"/></linearGradient>
<linearGradient id="ggr" x1="0" y1="0" x2="0" y2="1"><stop offset="0" stop-color="#7ccf7c"/><stop offset="0.6" stop-color="#2aa52a"/><stop offset="1" stop-color="#12c012"/></linearGradient>
<linearGradient id="gell" x1="0" y1="0" x2="1" y2="1"><stop offset="0" stop-color="#f4f4f4"/><stop offset="1" stop-color="#9a9a9a"/></linearGradient>
<linearGradient id="gpoly" x1="0" y1="0" x2="1" y2="1"><stop offset="0" stop-color="#e4e4e4"/><stop offset="1" stop-color="#8c8c8c"/></linearGradient>
</defs>
<!-- handles -->
<g fill="#cbcbcb">
<rect x="5" y="53" width="2" height="2"/><rect x="5" y="58" width="2" height="2"/><rect x="5" y="63" width="2" height="2"/>
<rect x="162" y="53" width="2" height="2"/><rect x="162" y="58" width="2" height="2"/><rect x="162" y="63" width="2" height="2"/>
<rect x="485" y="53" width="2" height="2"/><rect x="485" y="58" width="2" height="2"/><rect x="485" y="63" width="2" height="2"/>
<rect x="570" y="53" width="2" height="2"/><rect x="570" y="58" width="2" height="2"/><rect x="570" y="63" width="2" height="2"/>
<rect x="13" y="84" width="2" height="2"/><rect x="18" y="84" width="2" height="2"/><rect x="23" y="84" width="2" height="2"/>
</g>
<!-- separators -->
<rect x="353" y="47" width="1" height="24" fill="#cbcbcb"/>
<rect x="436" y="47" width="1" height="24" fill="#cbcbcb"/>
<!-- icon1 raise -->
<rect x="21.5" y="51.5" width="12" height="12" rx="1.2" fill="url(#gsq2)" stroke="#8c8c8c"/>
<path d="M22.5 63V52.5H33" stroke="#fff" fill="none"/>
<rect x="24.5" y="54.5" width="12" height="12" rx="1.2" fill="url(#gsq)" stroke="#8a8a8a"/>
<path d="M25.5 66V55.5H36" stroke="#fff" fill="none"/>
<!-- icon2 -->
<rect x="55.5" y="49.5" width="9" height="9" fill="url(#gsq2)" stroke="#9a9a9a"/><path d="M56.5 58V50.5H64" stroke="#fff" fill="none"/>
<rect x="65.5" y="59.5" width="9" height="9" fill="url(#gsq2)" stroke="#9a9a9a"/><path d="M66.5 68V60.5H74" stroke="#fff" fill="none"/>
<rect x="60.5" y="54.5" width="9" height="9" fill="url(#gsq)" stroke="#8a8a8a"/><path d="M61.5 63V55.5H69" stroke="#fff" fill="none"/>
<!-- icon3 -->
<rect x="96.5" y="54.5" width="9" height="9" fill="url(#gsq)" stroke="#9a9a9a"/><path d="M97.5 63V55.5H105" stroke="#fff" fill="none"/>
<rect x="91.5" y="49.5" width="9" height="9" fill="url(#gsq2)" stroke="#9a9a9a"/><path d="M92.5 58V50.5H100" stroke="#fff" fill="none"/>
<rect x="101.5" y="59.5" width="9" height="9" fill="url(#gsq2)" stroke="#9a9a9a"/><path d="M102.5 68V60.5H110" stroke="#fff" fill="none"/>
<!-- icon4 lower -->
<rect x="132.5" y="54.5" width="12" height="12" rx="1.2" fill="url(#gsq)" stroke="#8a8a8a"/>
<path d="M133.5 66V55.5H144" stroke="#fff" fill="none"/>
<rect x="129.5" y="51.5" width="12" height="12" rx="1.2" fill="url(#gsq2)" stroke="#8c8c8c"/>
<path d="M130.5 63V52.5H141" stroke="#fff" fill="none"/>
<!-- new -->
<path d="M175.5 49.5H192.5V63.5L186.5 69.5H175.5Z" fill="url(#gpage)" stroke="#9a9a9a"/>
<path d="M186.5 69.5V63.5H192.5" fill="#fff" stroke="#a8a8a8"/>
<circle cx="191" cy="54.2" r="6" fill="url(#ggreen)" stroke="#0b8a0b" stroke-width="0.8"/>
<path d="M191 50.5V58M187.2 54.2H194.8" stroke="#fff" stroke-width="2.2"/>
<!-- open -->
<rect x="210.5" y="48.5" width="23" height="20" rx="1" fill="url(#gwin)" stroke="#2d3033"/>
<rect x="210" y="48" width="24" height="3.5" fill="#34383c"/>
<path d="M218 59H232V70H219Z" fill="#5d95e8"/>
<rect x="220" y="61" width="12" height="2" fill="#e8eef6"/>
<path d="M218 63H234L232 70.5H219Z" fill="url(#gfolder)"/>
<!-- save -->
<rect x="248" y="49" width="20" height="20" rx="1" fill="#7b7b7b"/>
<rect x="251" y="49" width="14" height="10" fill="#f4f4f4"/>
<path d="M253 52.5H263M253 54.5H263M253 56.5H263" stroke="#c9c9c9" stroke-width="1"/>
<linearGradient id="gsl" x1="0" y1="0" x2="1" y2="1"><stop offset="0" stop-color="#f2f2f2"/><stop offset="1" stop-color="#b8b8b8"/></linearGradient><rect x="252" y="62" width="10" height="7" fill="url(#gsl)"/>
<rect x="253" y="63" width="3" height="4" fill="#7a7a7a"/>
<rect x="248" y="49" width="2" height="2" fill="#ddd"/>
<!-- save as -->
<rect x="284" y="49" width="20" height="20" rx="1" fill="#3a3a3a"/>
<rect x="287" y="49" width="14" height="10" fill="#eef2f8"/>
<path d="M289 52.5H299M289 54.5H299M289 56.5H299" stroke="#8aa4cc" stroke-width="1"/>
<path d="M291 69L296 62H298V69Z" fill="#cfcfcf"/>
<path d="M284.76 65.16L297.91 51.51L300.93 54.42L287.79 68.07Z" fill="#f0bc10" stroke="#8a6a00" stroke-width="0.4"/>
<path d="M284.91 65.31L298.06 51.65L298.81 52.38L285.67 66.04Z" fill="#fde36a"/>
<path d="M285.73 66.10L298.88 52.44L300.03 53.55L286.89 67.21Z" fill="#1c1c1c"/>
<path d="M283.50 69.50L284.76 65.16L287.79 68.07Z" fill="#e6d2a6"/>
<path d="M283.50 69.50L283.99 67.62L285.36 68.93Z" fill="#2a2418"/>
<path d="M297.91 51.51L299.93 49.71L301.50 50.80L302.65 52.33L300.93 54.42Z" fill="#d81010"/>
<!-- reload -->
<linearGradient id="grl" x1="0" y1="0" x2="0.3" y2="1"><stop offset="0" stop-color="#70c070"/><stop offset="0.45" stop-color="#1e861e"/><stop offset="0.8" stop-color="#0e9a0e"/><stop offset="1" stop-color="#10d010"/></linearGradient>
<linearGradient id="grlf" x1="0" y1="0" x2="1" y2="0"><stop offset="0.6" stop-color="#d9d9d9" stop-opacity="0"/><stop offset="1" stop-color="#d9d9d9" stop-opacity="0.85"/></linearGradient>
<path d="M339.06 63.23A10 10 0 1 1 335.30 50.52L340.2 49.2V58.8H331.2L333.42 55.92A4.6 4.6 0 1 0 334.17 60.94Z" fill="url(#grl)" stroke="#0a5c0a" stroke-width="0.9"/>
<path d="M333 58H341V68H333Z" fill="url(#grlf)"/>
<!-- undo (disabled) -->
<linearGradient id="gun" x1="0" y1="0" x2="0" y2="1"><stop offset="0" stop-color="#e4e4e4"/><stop offset="1" stop-color="#c4c4c4"/></linearGradient>
<linearGradient id="gre" x1="0" y1="0" x2="0" y2="1"><stop offset="0" stop-color="#d2d2d2"/><stop offset="1" stop-color="#a8a8a8"/></linearGradient>
<path d="M366.5 49.5L369.64 51.68A9.9 9.9 0 1 1 383.62 65.66L380.08 61.72A4.6 4.6 0 1 0 373.58 55.22L376 59H366.5Z" fill="url(#gun)" stroke="#bdbdbd" stroke-width="0.9"/>
<path transform="translate(790,0) scale(-1,1)" d="M366.5 49.5L369.64 51.68A9.9 9.9 0 1 1 383.62 65.66L380.08 61.72A4.6 4.6 0 1 0 373.58 55.22L376 59H366.5Z" fill="url(#gre)" stroke="#a5a5a5" stroke-width="0.9"/>
<!-- delete X -->
<linearGradient id="gx" x1="0" y1="0" x2="0" y2="1"><stop offset="0" stop-color="#c8c8c8"/><stop offset="0.5" stop-color="#a8a8a8"/><stop offset="1" stop-color="#8a8a8a"/></linearGradient><path d="M454 49L460 55L466 49L470 53L464 59L470 65L466 69L460 63L454 69L450 65L456 59L450 53Z" fill="url(#gx)" stroke="#8a8a8a" stroke-width="0.8"/>
<!-- page setup -->
<path d="M500.5 49.5H517.5V62.5L510.5 69.5H500.5Z" fill="#fafafa" stroke="#8f8f8f"/>
<path d="M510.5 69.5Q511.5 63.5 517.5 62.5" fill="#fff" stroke="#9a9a9a"/>
<rect x="502.5" y="51.5" width="4" height="4" fill="#eee" stroke="#888"/>
<path d="M507 53.5H513M504.5 56V64" stroke="#3d86f0" stroke-width="1"/>
<path d="M512.5 52L515.5 53.5L512.5 55ZM503 63.5L504.5 66.5L506 63.5Z" fill="#3d86f0"/>
<!-- zoom 1:1 -->
<path d="M548 60L554.5 68.5" stroke="#6e6e6e" stroke-width="2.8" stroke-linecap="round"/>
<path d="M548 60L554.5 68.5" stroke="#f4f4f4" stroke-width="1.1" stroke-linecap="round"/>
<radialGradient id="gzm" cx="0.4" cy="0.35" r="0.7"><stop offset="0" stop-color="#f4f8fc"/><stop offset="0.6" stop-color="#d0e0f0"/><stop offset="1" stop-color="#a8c0dc"/></radialGradient>
<circle cx="543" cy="56.2" r="6.2" fill="url(#gzm)" stroke="#6a7480" stroke-width="0.9"/>
<path d="M538.6 53.6L540.4 52.3H541.4V59.6H540.2V53.9L538.9 54.7ZM542.5 54.6H543.7V55.8H542.5ZM542.5 58.2H543.7V59.4H542.5ZM544.4 53.6L546.2 52.3H547.2V59.6H546V53.9L544.7 54.7Z" fill="#1e2838"/>
<!-- text T -->
<linearGradient id="gT" x1="0" y1="0" x2="0" y2="1"><stop offset="0" stop-color="#8a8a8a"/><stop offset="1" stop-color="#262626"/></linearGradient>
<path d="M584.5 48.5H603.5V63.5L597.5 69.5H584.5Z" fill="#f8f8f8" stroke="#8e8e8e"/>
<path d="M597.5 69.5Q598.5 64.5 603.5 63.5" fill="#fff" stroke="#9a9a9a"/>
<path d="M588 50.8H600.2V55.5H599.6Q599 53 597 53H595.7V63.4Q595.7 64.2 597.8 64.3V65.2H590.6V64.3Q593.1 64.2 593.1 63.4V53H591.2Q589 53 588.6 55.5H588Z" fill="url(#gT)"/>
<path d="M582.5 54L593.6 66.1" stroke="#bfae3a" stroke-width="2.4"/>
<path d="M582.5 54L593.6 66.1" stroke="#3a3520" stroke-width="0.7"/>
<!-- edit pencil -->
<path d="M621.5 49.5H638.5V62.5L631.5 69.5H621.5Z" fill="#f8f8f8" stroke="#8e8e8e"/><path d="M631.5 69.5Q632.5 63.5 638.5 62.5" fill="#fff" stroke="#999"/>
<g fill="#aaa"><rect x="623" y="51" width="1" height="1"/><rect x="623" y="54" width="1" height="1"/><rect x="623" y="57" width="1" height="1"/><rect x="623" y="60" width="1" height="1"/><rect x="623" y="63" width="1" height="1"/></g>
<path d="M626.5 63A5 5 0 0 1 631 54.5H637V61.5" stroke="#8a8a8a" fill="none" stroke-width="1"/>
<path d="M623.41 64.32L636.76 50.38L640.09 53.56L626.73 67.50Z" fill="#f0bc10" stroke="#8a6a00" stroke-width="0.4"/>
<path d="M623.57 64.48L636.93 50.53L637.76 51.33L624.40 65.28Z" fill="#fde36a"/>
<path d="M624.53 65.39L637.88 51.45L639.04 52.55L625.68 66.50Z" fill="#1c1c1c"/>
<path d="M622.30 68.80L623.41 64.32L626.73 67.50Z" fill="#e6d2a6"/>
<path d="M622.30 68.80L622.79 66.92L624.16 68.23Z" fill="#2a2418"/>
<path d="M636.76 50.38L638.80 48.58L640.50 49.80L641.79 51.45L640.09 53.56Z" fill="#d81010"/>
<!-- left toolbar -->
<path d="M11 112.5L29 103" stroke="#bbb" stroke-width="1.6" transform="translate(0.6,0.8)"/>
<path d="M11 112L29 102.8" stroke="#3a3a3a" stroke-width="1.4" stroke-dasharray="1.3 0.7"/>
<rect x="11" y="139" width="19" height="13" fill="#bdbdbd" opacity="0.6"/>
<rect x="10.5" y="137.5" width="18" height="13" fill="#e6e6e6" stroke="#3a3a3a"/>
<ellipse cx="20.5" cy="181" rx="9.5" ry="7" fill="#aaa" opacity="0.5"/>
<ellipse cx="20" cy="180.3" rx="9.5" ry="7" fill="url(#gell)" stroke="#4a4a4a" stroke-width="0.9"/>
<path d="M12.5 215.5L18.7 209.4L27.7 214.7L26.4 222L20.7 217.1L16.7 221.6Z" fill="#999" opacity="0.4" transform="translate(0.8,0.9)"/><path d="M12.5 215.5L18.7 209.4L27.7 214.7L26.4 222L20.7 217.1L16.7 221.6Z" fill="url(#gpoly)" stroke="#2e2e2e" stroke-width="1.1"/>
<path d="M14 243.5H28.8L27.6 249.6H26.6Q26.4 246.5 23.8 246.5H22L19.4 257.6Q19.4 258.6 21.6 258.8L21.2 260.8H12.2L12.6 258.8Q14.8 258.6 15.2 257.6L17.8 246.5H16.4Q13.6 246.5 12.6 249.6H11.8Z" fill="#8a8a8a" transform="translate(0.8,0.9)" opacity="0.45"/>
<path d="M14 243.5H28.8L27.6 249.6H26.6Q26.4 246.5 23.8 246.5H22L19.4 257.6Q19.4 258.6 21.6 258.8L21.2 260.8H12.2L12.6 258.8Q14.8 258.6 15.2 257.6L17.8 246.5H16.4Q13.6 246.5 12.6 249.6H11.8Z" fill="url(#gell)" stroke="#2e2e2e" stroke-width="0.9"/>
<path d="M15.2 283.5A6 6 0 0 1 25 291.5" stroke="#484848" fill="none" stroke-width="0.9" stroke-dasharray="2 0.5"/>
<rect x="16" y="314" width="7" height="5" fill="#00f"/>
<rect x="16" y="319" width="7" height="12" fill="#f00"/>
<rect x="16" y="331" width="7" height="4" fill="#000"/>
<path d="M10.3 367.2H14.6V366.6Q13 366.5 13.6 365.3L15.6 361.8H21.4L22 365.6Q22 366.5 20.8 366.6V367.2H26V366.6Q25 366.5 24.8 365.4L22.6 350.2H22L13.2 365.2Q12.4 366.4 10.4 366.6ZM16.3 360.6L21 352.8L21.2 360.6Z" fill="#444"/>
<path d="M26.5 362V371M22 366.5H31" stroke="#1a8a1a" stroke-width="3.2"/>
<path d="M26.5 362.5V370.5M22.5 366.5H30.5" stroke="#48c048" stroke-width="1.8"/>
</svg>

<div class="a" style="left:590px;top:196px;width:400px;height:327px;background:#efefef;box-shadow:0 1px 9px 0 rgba(0,0,0,1);border-radius:2px 2px 0 0;overflow:hidden">
  <div class="a" style="left:0;top:0;width:400px;height:27px;background:#2f2f2f"></div>
  <div class="a" style="left:10px;top:6px;width:14px;height:14px;border-radius:7px;background:#9abb7d"></div>
  <svg width="40" height="27" viewBox="0 0 40 27"><path d="M14 10L20 16M20 10L14 16" stroke="#2f2f2f" stroke-width="1.5"/></svg>
  <div class="t" style="left:127px;top:8px;font-weight:bold;color:#e6e6e6;font-size:13px;letter-spacing:0.6px">Propriété de l'élément</div>
  <div class="a" style="left:0;top:326px;width:400px;height:1px;background:#f8f8f8"></div><div class="a" style="left:0;top:27px;width:1px;height:300px;background:#f4f4f4"></div><div class="a" style="left:399px;top:27px;width:1px;height:300px;background:#f4f4f4"></div>
  <div class="t g" style="left:11px;top:45px;font-size:12px;letter-spacing:0.15px">Type de base :</div>
  <div class="a" style="left:204px;top:38px;width:184px;height:25px;border:1px solid #c2c2c2;border-radius:3px;background:#fff"></div>
  <div class="a" style="left:206px;top:41px;width:180px;height:19px;border:1px solid #d6d6d6;background:#fcfcfc"></div>
  <div class="a" style="left:369px;top:43px;width:1px;height:15px;background:#d6d6d6"></div>
  <svg width="400" height="327" viewBox="0 0 400 327"><path d="M372.3 48.5L376.5 52.8L380.7 48.5" stroke="#4a4a4a" stroke-width="1.6" fill="none"/></svg>
  <div class="t g" style="left:208px;top:45px;font-size:12px;letter-spacing:0.55px">Bornier</div>
  <div class="a" style="left:214px;top:287px;width:83px;height:29px;border:1px solid #c4c4c4;border-radius:3px;background:#fcfcfc"></div>
  <div class="a" style="left:305px;top:287px;width:83px;height:29px;border:1px solid #c4c4c4;border-radius:3px;background:#fcfcfc"></div>
  <div class="t g" style="left:233px;top:296px;font-size:12px;letter-spacing:0.45px">Annuler</div>
  <div class="t g" style="left:338px;top:296px;font-size:12px">OK</div>
</div>

</body></html>
